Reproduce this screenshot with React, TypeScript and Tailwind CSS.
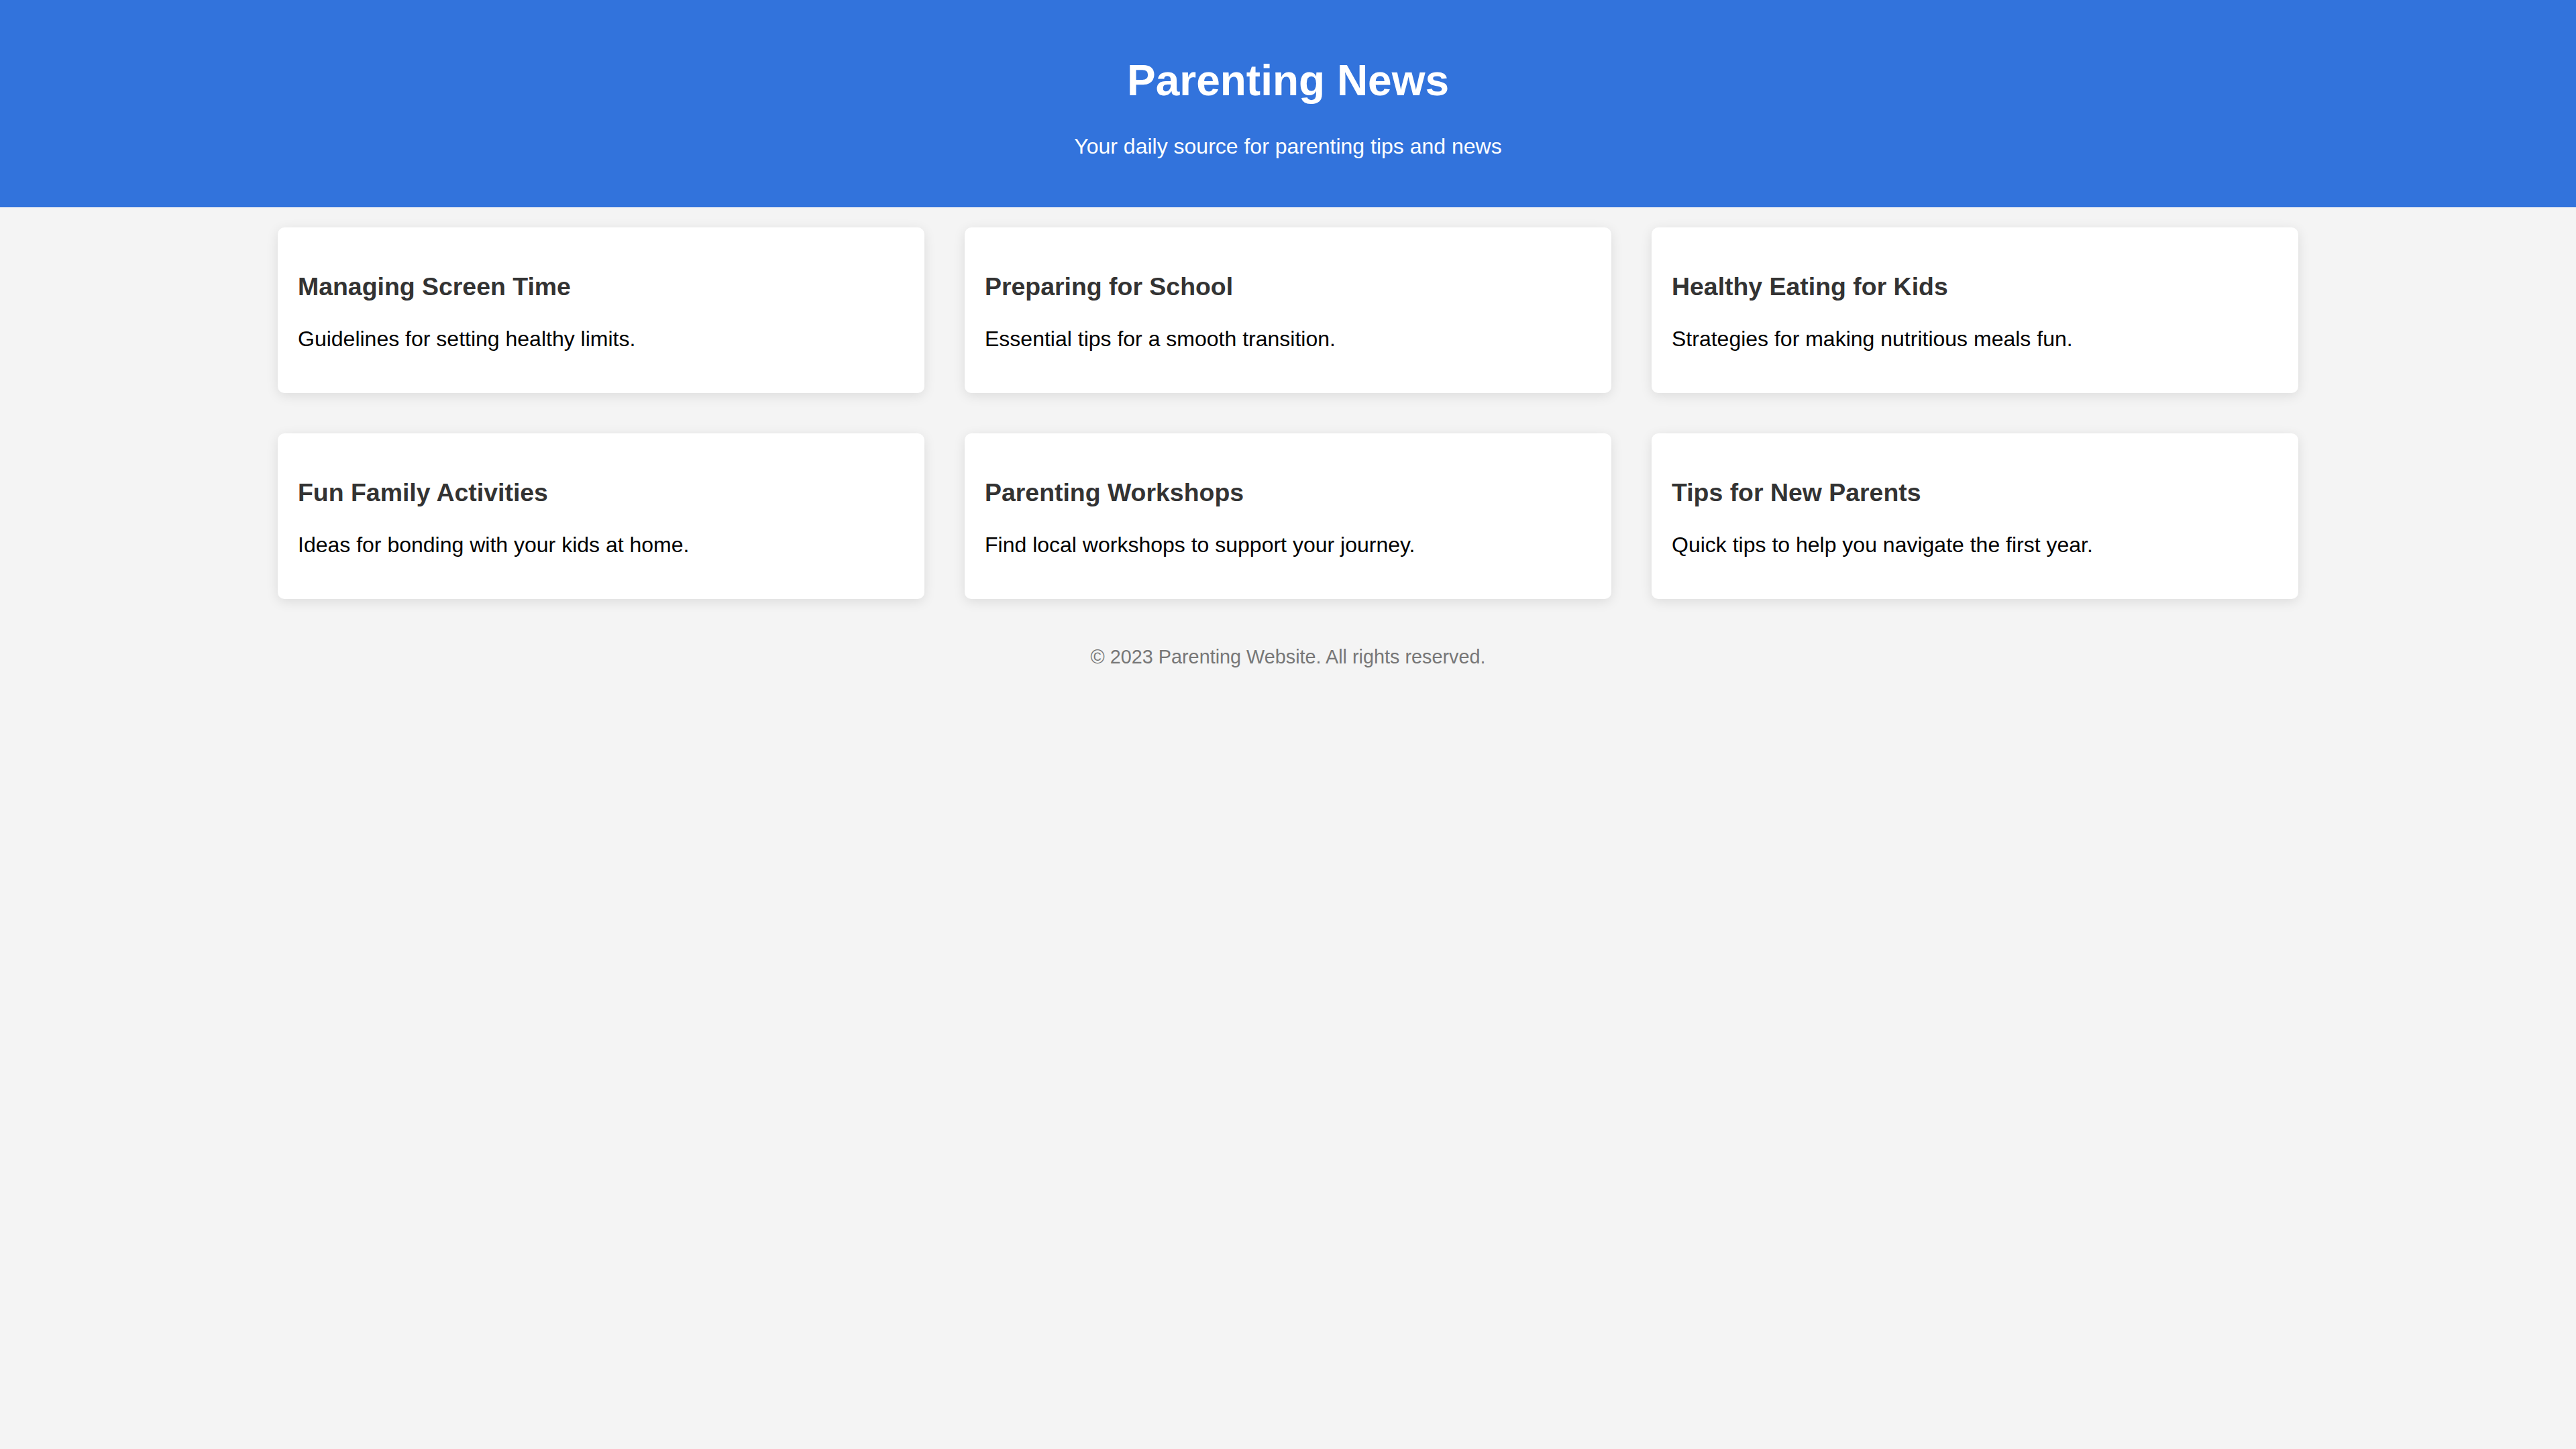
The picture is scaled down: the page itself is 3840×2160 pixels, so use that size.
const articles = [
  { title: "Managing Screen Time", text: "Guidelines for setting healthy limits." },
  { title: "Preparing for School", text: "Essential tips for a smooth transition." },
  { title: "Healthy Eating for Kids", text: "Strategies for making nutritious meals fun." },
  { title: "Fun Family Activities", text: "Ideas for bonding with your kids at home." },
  { title: "Parenting Workshops", text: "Find local workshops to support your journey." },
  { title: "Tips for New Parents", text: "Quick tips to help you navigate the first year." },
];

export default function App() {
  return (
    <div className="min-h-screen bg-[#f4f4f4] font-['Liberation_Sans',Arial,sans-serif] text-black">
      {/* Blue banner */}
      <header className="bg-[#3273dc] px-[40px] py-[40px] text-center text-white">
        <h1 className="mt-[43px] mb-[43px] text-[64px] font-bold leading-[normal]">Parenting News</h1>
        <p className="mb-[32px] text-[32px] leading-[normal]">Your daily source for parenting tips and news</p>
      </header>

      <main className="mx-auto grid w-[80%] grid-cols-3 gap-[60px] px-[30px] py-[30px]">
        {articles.map((a) => (
          <article
            key={a.title}
            className="rounded-[10px] bg-white px-[30px] py-[30px] shadow-[0_4px_18px_rgba(0,0,0,0.1)]"
          >
            <h3 className="mt-[37.44px] mb-[37.44px] text-[37.44px] font-bold leading-[normal] text-[#333]">
              {a.title}
            </h3>
            <p className="mb-[32px] text-[32px] leading-[normal]">{a.text}</p>
          </article>
        ))}
      </main>

      <footer className="py-[40px] text-center text-[28.8px] leading-[normal] text-[#777]">
        © 2023 Parenting Website. All rights reserved.
      </footer>
    </div>
  );
}
